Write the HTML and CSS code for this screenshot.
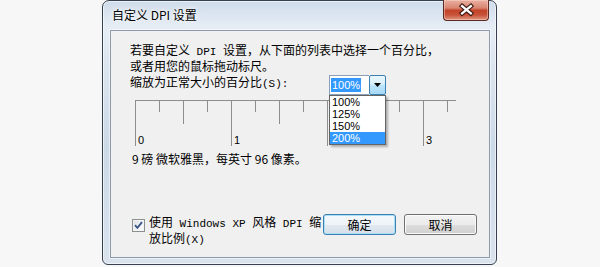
FILE: index.html
```html
<!DOCTYPE html>
<html lang="zh-CN">
<head>
<meta charset="utf-8">
<title>自定义 DPI 设置</title>
<link rel="stylesheet" href="styles.css">
</head>
<body>
<div class="desktop">
  <div class="window">
    <div class="titlebar">
      <span class="title">自定义 DPI 设置</span>
      <button class="close" aria-label="关闭">
        <svg width="46" height="21" viewBox="0 0 46 21">
          <path d="M19.5 7 L28.5 14.5 M28.5 7 L19.5 14.5" stroke="#3a1710" stroke-width="4.6" stroke-linecap="square" fill="none"/>
          <path d="M19.5 7 L28.5 14.5 M28.5 7 L19.5 14.5" stroke="#ffffff" stroke-width="2.4" stroke-linecap="square" fill="none"/>
        </svg>
      </button>
    </div>
    <div class="client">
      <p class="desc">若要自定义<span class="mono"> DPI </span>设置，从下面的列表中选择一个百分比，<br>或者用您的鼠标拖动标尺。</p>
      <div class="scale-row">
        <label class="scale-label">缩放为正常大小的百分比<span class="mono">(S):</span></label>
        <div class="combo">
          <span class="combo-field"><span class="sel">100%</span></span>
          <span class="combo-btn">
            <svg width="7" height="4" viewBox="0 0 7 4"><path d="M0 0H7L3.5 4Z" fill="#000"/></svg>
          </span>
          <ul class="combo-list">
            <li>100%</li>
            <li>125%</li>
            <li>150%</li>
            <li class="hl">200%</li>
          </ul>
        </div>
      </div>
      <svg class="ruler" width="325" height="46" viewBox="0 0 325 46">
        <path d="M0 0.5H321 M0.5 0V46 M24.5 0V12 M48.5 0V24 M72.5 0V12 M96.5 0V46 M120.5 0V12 M144.5 0V24 M168.5 0V12 M192.5 0V46 M216.5 0V12 M240.5 0V24 M264.5 0V12 M288.5 0V46 M312.5 0V12" stroke="#8d8d8d" stroke-width="1" fill="none"/>
        <text x="3" y="44">0</text>
        <text x="99" y="44">1</text>
        <text x="291" y="44">3</text>
      </svg>
      <p class="info">9 磅 微软雅黑，每英寸 96 像素。</p>
      <div class="footer">
        <label class="xp">
          <span class="check">
            <svg width="11" height="11" viewBox="0 0 11 11"><path d="M2 5.2 L4.4 7.8 L9 2.2" stroke="#3d5688" stroke-width="1.9" fill="none"/></svg>
          </span>
          <span class="xp-text">使用<span class="mono"> Windows XP </span>风格<span class="mono"> DPI </span>缩<br>放比例<span class="mono">(X)</span></span>
        </label>
        <div class="buttons">
          <button class="btn default">确定</button>
          <button class="btn">取消</button>
        </div>
      </div>
    </div>
  </div>
</div>
</body>
</html>
```
FILE: styles.css
```css
html, body {
  margin: 0;
  padding: 0;
}
body {
  width: 600px;
  height: 267px;
  overflow: hidden;
  background: #f7f7f7;
  font-family: "Noto Sans CJK SC", sans-serif;
  color: #000;
}
.desktop {
  padding-left: 102px;
}
.window {
  width: 395px;
  height: 265px;
  box-sizing: border-box;
  border: 1px solid #35414e;
  border-radius: 7px 7px 6px 6px;
  background: linear-gradient(180deg, #cfdcea 0%, #e6edf5 10%, #dbe5ef 25%, #ccd9e7 55%, #d9e3ee 100%);
  box-shadow: inset 0 0 0 1px rgba(255, 255, 255, 0.6);
  display: flex;
  flex-direction: column;
  padding: 0 6px 6px 7px;
}
.titlebar {
  height: 29px;
  display: flex;
  align-items: flex-start;
}
.title {
  font-size: 12px;
  line-height: 16px;
  margin-top: 6px;
  margin-left: 2px;
  text-shadow: 0 0 6px #fff, 0 0 3px #fff;
}
.close {
  margin: -1px 1px 0 auto;
  width: 46px;
  height: 21px;
  padding: 0;
  border: 1px solid #5b2a20;
  border-top: none;
  border-radius: 0 0 4px 4px;
  background: linear-gradient(180deg, #e9b0a2 0%, #d98470 40%, #c2442a 52%, #c65339 75%, #e39a84 100%);
  box-shadow: inset 0 0 0 1px rgba(255, 220, 210, 0.45);
  display: flex;
  align-items: center;
  justify-content: center;
  box-sizing: border-box;
}
.close svg {
  display: block;
  margin-left: -1px;
  margin-top: -1px;
}
.client {
  width: 380px;
  height: 228px;
  box-sizing: border-box;
  border: 1px solid #8d9aaa;
  box-shadow: 0 0 0 1px rgba(255, 255, 255, 0.5);
  background: #f0f0f0;
  display: flex;
  flex-direction: column;
  padding: 12px 12px 10px 19px;
}
.mono {
  font-family: "Liberation Mono", monospace;
  font-size: 11px;
}
.desc {
  margin: 0;
  font-size: 12px;
  line-height: 13px;
}
.scale-row {
  display: grid;
  grid-template-columns: 199px 57px;
  align-items: start;
  margin-top: 3px;
}
.scale-label {
  font-size: 12px;
  line-height: 13px;
  margin-top: 0;
}
.combo {
  position: relative;
  width: 57px;
  height: 20px;
  display: flex;
}
.combo-field {
  flex: 1;
  box-sizing: border-box;
  height: 20px;
  background: #fff;
  border: 1px solid #8a9fb6;
  border-right: none;
  padding-left: 1px;
  display: flex;
  align-items: center;
}
.sel {
  display: block;
  font-family: "Liberation Sans", sans-serif;
  font-size: 11px;
  line-height: 14px;
  padding: 0 1px;
  background: #3399ff;
  color: #fff;
}
.combo-btn {
  width: 17px;
  height: 20px;
  box-sizing: border-box;
  border: 1px solid #3c7fb1;
  border-radius: 2px;
  background: linear-gradient(180deg, #eaf6fd 0%, #d9f0fc 45%, #bee6fd 50%, #a7d9f5 100%);
  display: flex;
  align-items: center;
  justify-content: center;
}
.combo-btn svg {
  display: block;
}
.combo-list {
  position: absolute;
  top: 20px;
  left: 0;
  width: 57px;
  box-sizing: border-box;
  margin: 0;
  padding: 0;
  list-style: none;
  background: #fff;
  border: 1px solid #646464;
  box-shadow: 2px 2px 2px rgba(0, 0, 0, 0.28);
  font-family: "Liberation Sans", sans-serif;
  font-size: 11px;
  line-height: 12px;
  z-index: 2;
}
.combo-list li {
  padding-left: 2px;
}
.combo-list li.hl {
  background: #3399ff;
  color: #fff;
}
.ruler {
  display: block;
  margin: 5px 0 0 5px;
}
.ruler text {
  font-family: "Liberation Sans", sans-serif;
  font-size: 11px;
  fill: #000;
}
.info {
  margin: 6px 0 0 2px;
  font-size: 12px;
  line-height: 14px;
}
.footer {
  margin-top: auto;
  display: flex;
  justify-content: space-between;
  align-items: flex-start;
}
.xp {
  display: flex;
  gap: 4px;
  margin: 1px 0 0 2px;
  font-size: 12px;
  line-height: 13px;
}
.check {
  width: 13px;
  height: 13px;
  box-sizing: border-box;
  margin-top: 4px;
  border: 1px solid #8e8f8f;
  background: linear-gradient(135deg, #d8dde3 0%, #f4f5f6 60%, #ffffff 100%);
  box-shadow: inset 0 0 0 1px #f2f3f5;
  display: flex;
  align-items: center;
  justify-content: center;
  flex: none;
}
.check svg {
  display: block;
}
.buttons {
  display: flex;
  gap: 8px;
}
.btn {
  width: 73px;
  height: 21px;
  box-sizing: border-box;
  padding: 0;
  font-family: "Noto Sans CJK SC", sans-serif;
  font-size: 12px;
  line-height: 19px;
  color: #000;
  border: 1px solid #707070;
  border-radius: 3px;
  background: linear-gradient(180deg, #f2f2f2 0%, #ebebeb 50%, #dddddd 51%, #cfcfcf 100%);
  box-shadow: inset 0 0 0 1px #fbfbfb;
}
.btn.default {
  border-color: #3c7fb1;
  background: linear-gradient(180deg, #f5f9fc 0%, #edf3f8 50%, #e1e9f0 51%, #d6e0ea 100%);
  box-shadow: inset 0 0 0 1px #a9def7;
}
```
